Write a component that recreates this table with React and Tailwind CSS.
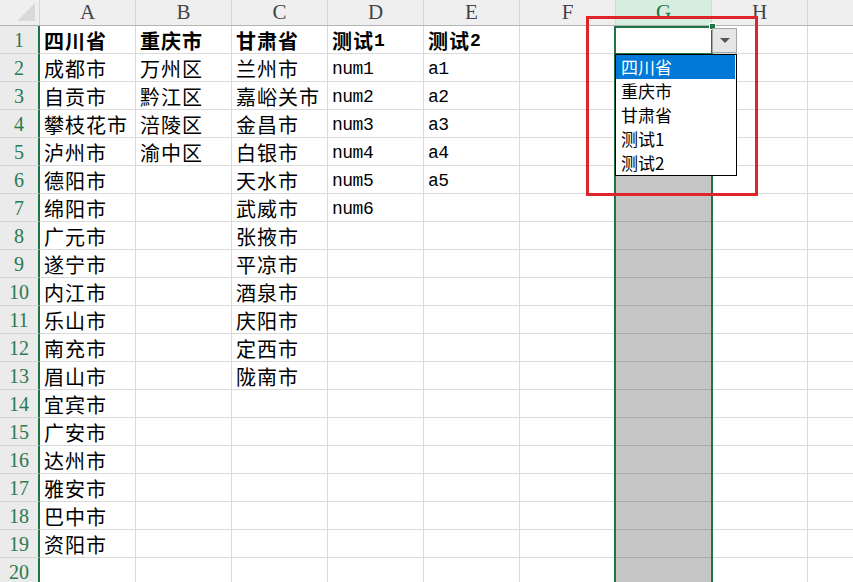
import React from 'react'

const cols = ['A', 'B', 'C', 'D', 'E', 'F', 'G', 'H', 'I']

const data = {
    A: ['四川省', '成都市', '自贡市', '攀枝花市', '泸州市', '德阳市', '绵阳市', '广元市', '遂宁市', '内江市', '乐山市', '南充市', '眉山市', '宜宾市', '广安市', '达州市', '雅安市', '巴中市', '资阳市'],
    B: ['重庆市', '万州区', '黔江区', '涪陵区', '渝中区'],
    C: ['甘肃省', '兰州市', '嘉峪关市', '金昌市', '白银市', '天水市', '武威市', '张掖市', '平凉市', '酒泉市', '庆阳市', '定西市', '陇南市'],
    D: ['测试1', 'num1', 'num2', 'num3', 'num4', 'num5', 'num6'],
    E: ['测试2', 'a1', 'a2', 'a3', 'a4', 'a5'],
}

const options = ['四川省', '重庆市', '甘肃省', '测试1', '测试2']

// ascii runs get the mono face, cjk keeps the sans one
function CellText({ text }) {
    const parts = text.split(/([\x00-\x7f]+)/).filter(Boolean)
    return (
        <>
            {parts.map((p, i) =>
                /^[\x00-\x7f]+$/.test(p)
                    ? <span key={i} className="font-['Liberation_Mono',monospace] text-[18px] tracking-[-0.5px]">{p}</span>
                    : <span key={i}>{p}</span>
            )}
        </>
    )
}

export default function App() {
    const rows = Array.from({ length: 20 }, (_, i) => i + 1)

    return (
        <div className="relative w-[853px] h-[582px] overflow-hidden bg-white font-['Noto_Sans_CJK_SC',sans-serif]">
            {/* Column headers */}
            <div className="flex h-[26px] border-b border-[#b4b4b4] bg-[#efefef]">
                <div className="w-[40px] shrink-0 border-r border-[#d6d6d6] flex items-end justify-end pr-[4px] pb-[4px]">
                    <svg width="18" height="18" viewBox="0 0 18 18">
                        <polygon points="18,0 18,18 0,18" fill="#d9d9d9" />
                    </svg>
                </div>
                {cols.map((c) => (
                    <div
                        key={c}
                        className={`w-[96px] shrink-0 border-r border-[#d6d6d6] flex items-center justify-center font-['Liberation_Serif',serif] text-[21px] ${c === 'G' ? 'bg-[#d6eedf] text-[#217346]' : 'text-[#444]'}`}>
                        {c !== 'I' && c}
                    </div>
                ))}
            </div>

            {/* Rows */}
            {rows.map((r) => (
                <div key={r} className="flex h-[28px]">
                    <div className="w-[40px] shrink-0 bg-[#ebebeb] border-r-2 border-r-[#217346] border-b border-b-[#d2d2d2] flex items-center justify-center font-['Liberation_Serif',serif] text-[20px] text-[#2a7a52]">
                        {r}
                    </div>
                    {cols.map((c) => {
                        const val = data[c]?.[r - 1]
                        const isG = c === 'G'
                        const bg = isG && r > 1 ? 'bg-[#c6c6c6] border-b-[#a9a9a9]' : 'bg-white border-b-[#dadada]'
                        return (
                            <div
                                key={c}
                                className={`w-[96px] shrink-0 border-r border-r-[#dadada] border-b ${bg} flex items-center pl-[4px] pt-[3px] text-[20px] tracking-[1px] text-black whitespace-nowrap overflow-hidden ${r === 1 ? 'font-bold' : ''}`}>
                                {val && <CellText text={val} />}
                            </div>
                        )
                    })}
                </div>
            ))}

            {/* Selection outline for column G */}
            <div className="absolute left-[614px] top-[26px] w-[99px] h-[560px] border-x-2 border-[#217346]"></div>

            {/* Active cell G1 with its validation dropdown */}
            <div className="absolute left-[614px] top-[26px] w-[99px] h-[29px] border-2 border-[#217346]">
                <div className="absolute -right-[5px] -top-[5px] w-[7px] h-[7px] bg-[#217346] border border-white"></div>
                <div className="absolute left-[96px] top-[0px] w-[25px] h-[25px] border border-[#a6a6a6] bg-[#e6e6e6] flex items-center justify-center">
                    <div className="w-0 h-0 border-x-[5px] border-x-transparent border-t-[5px] border-t-[#555]"></div>
                </div>
                <div className="absolute -left-[1px] top-[26px] w-[122px] border border-black bg-white">
                    {options.map((o, i) => (
                        <div
                            key={o}
                            className={`h-[24px] leading-[24px] pl-[5px] text-[17px] ${i === 0 ? 'bg-[#0078d7] text-white mr-[1px]' : 'text-black'}`}>
                            {o}
                        </div>
                    ))}
                </div>
            </div>

            {/* Red highlight box */}
            <div className="absolute left-[586px] top-[16px] w-[172px] h-[180px] border-[3px] border-[#e0242c]"></div>
        </div>
    )
}
